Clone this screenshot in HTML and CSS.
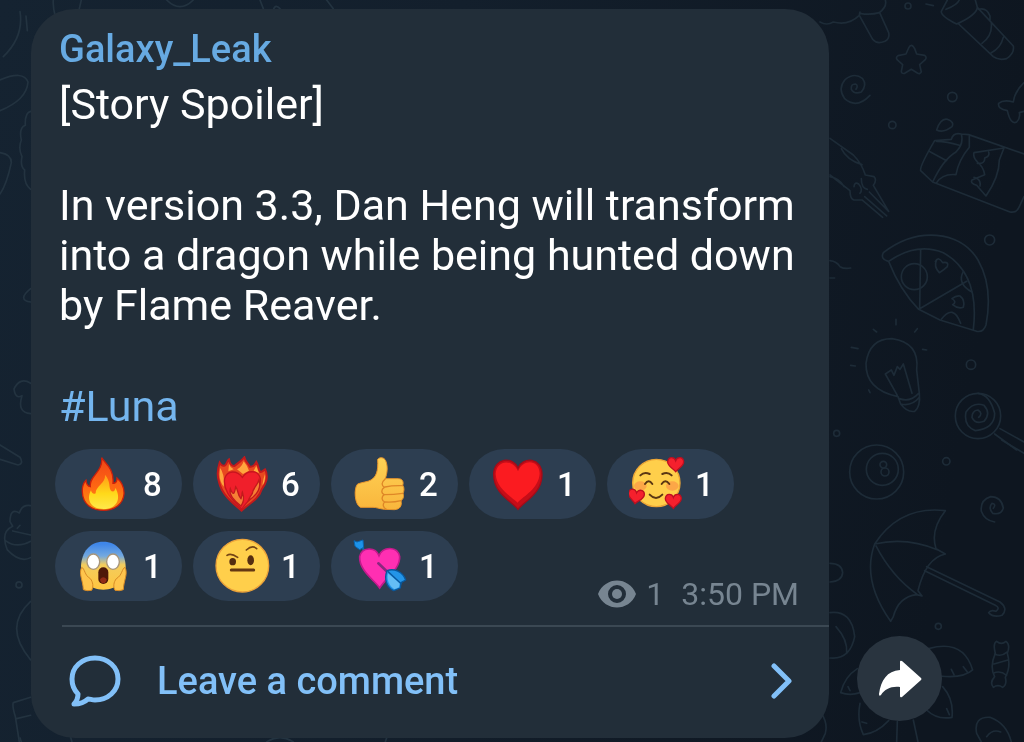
FILE: index.html
```
<!DOCTYPE html>
<html lang="en">
<head>
    <meta charset="UTF-8">
    <meta name="viewport" content="width=device-width, initial-scale=1.0">
    <title>Galaxy_Leak</title>
    <link rel="stylesheet" href="styles.css">
</head>
<body>

<!-- chat wallpaper doodles -->
<svg class="wallpaper" viewBox="0 0 1024 742" preserveAspectRatio="xMaxYMin slice" aria-hidden="true">
    <g transform="translate(820 0) scale(.3333)">
        <path d="M0 66Q20 78 40 66Q85 78 118 46Q120 30 120 40Q150 46 178 38Q202 20 196 0M118 46L158 118Q170 134 195 124Q210 115 206 98L180 40"/>
        <circle cx="264" cy="18" r="9"/><path d="M318 12L340 17"/>
        <path d="M382 0L364 34Q362 48 410 72Q470 45 472 22L466 0M378 28Q412 15 418 0M416 72L520 170Q535 182 560 176Q584 160 580 138L472 22M476 28Q500 22 510 48L510 60M486 130Q518 108 514 68M514 158Q542 144 550 112"/>
        <path d="M274 136Q279 136 284 146L290 162L314 166Q322 172 315 180L299 194L304 216Q300 224 292 219L274 208L254 220Q244 222 244 214L248 194L232 180Q226 172 234 167L258 162L266 144Q270 136 274 136Z"/>
        <path d="M108 268Q116 256 106 252Q92 252 94 268Q102 284 124 276Q142 254 128 236Q104 216 76 238Q52 266 74 296Q110 328 150 286"/>
        <circle cx="397" cy="291" r="14"/><circle cx="217" cy="375" r="11"/>
        <path d="M612 248Q584 275 580 306Q550 298 536 310Q532 326 562 332Q572 376 590 366Q602 354 598 338L612 334"/>
        <path d="M350 390Q362 354 382 358Q404 366 396 380Q370 400 350 390ZM338 546L302 512Q298 500 344 422L394 418Q400 396 424 402L446 404L612 462M338 546L570 636Q590 640 598 620L612 590M330 455L380 482M350 424Q380 424 418 436M338 546Q370 478 408 456Q432 432 424 402M350 548Q368 520 408 524Q416 480 448 442L448 406M552 444L462 458Q458 472 474 488Q490 500 494 524L456 540Q450 550 470 556L498 588Q538 530 538 480ZM472 490Q496 492 494 474Q510 470 506 456M462 532Q484 536 480 558"/>
        <path d="M30 415L100 465Q125 490 136 525L162 530Q172 540 160 556L206 634M64 446Q80 480 126 494M30 525L90 572Q90 596 102 600L126 600L188 652M30 530Q60 536 72 560M102 560Q104 544 116 552Q130 568 120 580M124 536Q124 564 142 568M134 590L200 648M148 576L206 634"/>
    </g>
    <g transform="translate(820 220) scale(.3333)">
        <path d="M190 98C290 20 420 30 474 120Q520 200 498 315Q490 338 470 334L360 300L296 268Q240 210 206 124Q180 118 190 98ZM206 124Q290 66 370 98Q480 160 460 328M302 90L299 266L440 184"/>
        <circle cx="283" cy="170" r="39"/><path d="M430 155Q410 190 456 216M364 298Q400 250 422 310M350 120Q340 140 358 158Q372 150 382 140Q388 124 368 128Q356 108 346 124M396 236Q408 226 420 228Q436 240 430 262Q414 268 398 254Q412 246 396 236"/>
        <circle cx="509" cy="60" r="15"/><circle cx="453" cy="434" r="14"/><circle cx="50" cy="640" r="9"/>
        <path d="M30 122Q50 124 60 140Q74 148 92 144M30 174L44 174M228 298L228 314M160 328L170 336M292 326L284 336M94 382L114 386M92 436L106 438M308 388L320 390M146 510L150 518"/>
        <path d="M234 530Q136 510 138 430Q148 356 216 356Q300 368 290 450L298 520Q302 560 284 574Q262 578 242 552ZM232 526L196 462L214 450L222 466L232 440L240 448L250 432L276 520M238 536Q270 548 296 520M242 552Q276 560 298 532"/>
        <circle cx="474" cy="588" r="68"/><path d="M476 592Q490 580 474 570Q456 572 456 592Q466 614 492 604Q514 580 492 556Q460 544 438 576Q430 618 466 632Q524 626 524 580Q510 524 474 520M540 626L612 666M524 642L590 690"/>
    </g>
    <g transform="translate(820 440) scale(.3333)">
        <circle cx="170" cy="96" r="81"/><circle cx="187" cy="88" r="48"/><circle cx="190" cy="74" r="10"/><circle cx="195" cy="96" r="12"/>
        <circle cx="379" cy="64" r="11"/><circle cx="355" cy="559" r="9"/><path d="M545 0L612 40"/>
        <path d="M520 205Q530 192 516 190Q504 204 518 220Q544 226 550 204Q544 170 512 170Q480 180 484 214Q494 242 524 246"/>
        <path d="M164 312Q240 196 376 212Q330 270 348 326L376 342Q318 354 294 452L306 468L290 464Q236 470 220 530L212 544Q124 420 164 312Q260 290 354 330M168 318Q216 410 290 462M320 380L540 486Q566 506 546 526Q520 534 506 518Q512 508 528 514Q542 504 526 496L314 392"/>
        <path d="M30 370Q66 370 68 398Q66 424 30 426M30 518Q96 510 104 590Q90 660 30 654M48 560Q84 600 80 640"/>
        <path d="M326 626Q430 596 458 690Q430 716 360 708M394 688L402 704M430 680L442 696M368 740Q402 778 396 832Q350 840 320 810M112 686Q74 710 62 758Q90 768 120 758M120 790Q110 840 130 884Q170 880 206 842M232 845L230 906M280 840L294 906M84 740L90 752M380 806L388 824M126 846L140 850"/>
        <path d="M526 640Q518 610 530 604Q544 616 558 604Q572 614 562 640Q574 680 556 712Q562 734 548 742Q534 732 520 742Q508 728 524 710Q508 680 526 640ZM524 642Q544 652 562 636M522 672L564 660M520 700Q540 690 560 706M470 880Q460 830 510 832Q560 850 574 906M470 880L484 906M500 890Q518 866 542 876M4 820Q24 850 16 880L4 906"/>
    </g>
    <g class="lighter" transform="scale(.3333)">
        <path d="M60 35Q72 110 10 170M78 48L82 92M0 240Q70 210 84 246Q80 300 0 332M92 334Q74 338 76 376Q56 384 64 420Q54 446 66 470Q60 500 74 510Q70 552 92 568M0 458Q34 463 34 488Q20 554 0 582M92 866Q50 900 92 906M92 1150Q60 1130 42 1167Q46 1199 66 1187Q50 1238 92 1241M0 1335L60 1372Q72 1392 54 1395L0 1378"/>
        <path d="M92 1517Q66 1513 58 1539Q30 1522 30 1565L38 1579Q0 1596 22 1650Q60 1690 92 1673M38 1593L92 1605M16 1622Q50 1647 92 1624M60 1576L52 1585M92 1804Q8 1880 92 1980M92 2092L40 2108Q36 2118 46 2150L58 2226M50 2156L92 2146"/>
        <circle cx="57" cy="1755" r="9"/>
        <path d="M160 0Q158 20 166 50M244 0L238 26M500 0Q540 40 580 0M780 0L790 26M820 30Q826 10 840 26M980 0L1000 26M60 2214L64 2226M212 2212L216 2226M800 2226Q840 2200 880 2226M1160 2214L1156 2226"/>
    </g>
</svg>

<main class="chat">
    <article class="bubble">
        <div class="content">
            <h2 class="channel">Galaxy_Leak</h2>
            <p>[Story Spoiler]</p>
            <p>In version 3.3, Dan Heng will transform into a dragon while being hunted down by Flame Reaver.</p>
            <p><a href="#luna">#Luna</a></p>
        </div>

        <div class="reactions">
            <button type="button" class="reaction" aria-label="Fire, 8">
                <svg viewBox="0 0 168 168">
                    <defs>
                        <linearGradient id="fireOuter" x1="0" y1="0" x2="0" y2="1"><stop offset="0" stop-color="#f04416"/><stop offset=".6" stop-color="#ff6a13"/><stop offset="1" stop-color="#f79a10"/></linearGradient>
                        <linearGradient id="fireInner" x1="0" y1="0" x2="0" y2="1"><stop offset="0" stop-color="#ff9a16"/><stop offset=".55" stop-color="#ffd91a"/><stop offset="1" stop-color="#ffe94a"/></linearGradient>
                    </defs>
                    <path d="M74 5C84 22 112 38 108 82C118 82 120 74 120 66C136 80 142 96 141 114C138 145 112 163 80 163C44 163 17 144 16 108C15 92 20 80 27 73C28 84 33 91 40 92C35 60 79 48 74 5Z" fill="url(#fireOuter)" stroke="#c9200c" stroke-width="4"/>
                    <path d="M84 56C104 80 92 94 104 106C112 108 115 101 115 95C134 128 120 158 80 159C38 159 28 128 42 103C44 112 50 116 56 112C55 90 87 82 84 56Z" fill="url(#fireInner)"/>
                </svg>
                <span>8</span>
            </button>
            <button type="button" class="reaction" aria-label="Heart on fire, 6">
                <svg viewBox="0 0 168 168">
                    <path d="M80 164C62 148 20 118 12 78C4 54 10 32 14 20C20 30 26 30 30 28C36 24 36 14 42 10C44 22 50 30 58 30C66 24 76 18 88 4C92 20 100 22 104 32C114 34 120 26 124 18C132 30 130 42 136 48C144 48 146 42 150 40C162 62 152 86 140 100C130 132 102 142 80 164Z" fill="#e8481f" stroke="#c21a1c" stroke-width="6"/>
                    <path d="M16 36Q30 60 26 92Q8 70 16 36ZM42 24Q46 36 56 40L40 46ZM86 16Q96 28 102 44L84 54L66 40Q80 34 86 16ZM124 30L132 52L116 44ZM150 54Q152 78 142 88Q144 70 150 54Z" fill="#ffa63e"/>
                    <path d="M80 160C64 140 22 112 29 68C36 42 66 42 82 64C98 40 130 42 136 68C140 104 100 128 80 160Z" fill="#f01f2b" stroke="#c9141f" stroke-width="4"/>
                    <path d="M46 98C54 118 58 118 62 92C70 100 66 116 78 128C82 120 80 112 82 108C90 130 84 140 78 150C62 138 40 120 46 98Z" fill="#f58035" stroke="#c21a1c" stroke-width="4"/>
                    <path d="M132 72C126 90 114 96 112 112C108 120 102 126 100 134C124 118 140 96 132 72Z" fill="#f58035" stroke="#c21a1c" stroke-width="4"/>
                </svg>
                <span>6</span>
            </button>
            <button type="button" class="reaction" aria-label="Thumbs up, 2">
                <svg viewBox="0 0 168 168">
                    <defs><linearGradient id="thumb" x1="0" y1="0" x2="0" y2="1"><stop offset="0" stop-color="#ffd255"/><stop offset="1" stop-color="#f9b63c"/></linearGradient></defs>
                    <path d="M74 10C80 2 94 4 98 14C106 34 102 52 97 68L136 68C148 68 153 78 149 88C155 96 153 106 150 112C154 122 150 130 144 134C148 150 140 160 124 161L94 160C78 158 70 154 60 154L22 154C4 144 2 96 14 84C28 78 44 78 54 72C70 62 76 46 74 10Z" fill="url(#thumb)" stroke="#e6942c" stroke-width="3"/>
                    <path d="M97 68C86 78 84 88 94 94C84 100 84 112 94 116C84 122 86 134 95 138C88 144 90 156 100 160M96 93Q118 88 149 89M95 116Q122 116 149 112M96 138Q120 140 144 134" fill="none" stroke="#df8727" stroke-width="4" stroke-linecap="round"/>
                </svg>
                <span>2</span>
            </button>
            <button type="button" class="reaction" aria-label="Red heart, 1">
                <svg viewBox="0 0 168 168">
                    <path d="M81 160C62 136 8 112 8 56C8 4 66 0 81 36C96 0 153 4 153 56C153 112 100 136 81 160Z" fill="#c60d18" stroke="#a50b18" stroke-width="4"/>
                    <path d="M80 140C64 124 16 98 14 54C16 10 66 8 81 46C96 8 144 10 146 52C144 98 98 120 80 140Z" fill="#fb1b20"/>
                </svg>
                <span>1</span>
            </button>
            <button type="button" class="reaction" aria-label="Smiling face with hearts, 1">
                <svg viewBox="0 0 168 168">
                    <defs><path id="miniHeart" d="M0 21C-7 11-25 5-24-9C-22-25-4-24 0-12C4-24 23-25 24-9C24 5 7 11 0 21Z"/></defs>
                    <circle cx="82" cy="81" r="71" fill="#ffcf4b" stroke="#eda636" stroke-width="4"/>
                    <ellipse cx="34" cy="90" rx="19" ry="14" fill="#fb9a46" opacity=".75"/>
                    <ellipse cx="130" cy="90" rx="19" ry="14" fill="#fb9a46" opacity=".75"/>
                    <path d="M34 58Q46 46 62 54M100 54Q116 46 128 58M48 84Q59 68 70 84M98 84Q109 68 121 84M62 116Q81 136 100 116" fill="none" stroke="#5b3713" stroke-width="6" stroke-linecap="round"/>
                    <use href="#miniHeart" transform="translate(140 26)" fill="#f5202d" stroke="#bd1020" stroke-width="4"/>
                    <use href="#miniHeart" transform="translate(21 122) rotate(8)" fill="#f5202d" stroke="#bd1020" stroke-width="4"/>
                    <use href="#miniHeart" transform="translate(133 136)" fill="#f5202d" stroke="#bd1020" stroke-width="4"/>
                </svg>
                <span>1</span>
            </button>
            <button type="button" class="reaction" aria-label="Screaming face, 1">
                <svg viewBox="0 0 168 168">
                    <defs><linearGradient id="scream" x1="0" y1="0" x2="0" y2="1"><stop offset=".05" stop-color="#3f86e8"/><stop offset=".3" stop-color="#73a9e0"/><stop offset=".48" stop-color="#f3cc5d"/><stop offset="1" stop-color="#ffc63f"/></linearGradient></defs>
                    <path d="M79 11C120 11 144 42 146 84C146 128 120 155 79 155C38 155 12 128 12 84C14 42 38 11 79 11Z" fill="url(#scream)"/>
                    <path d="M14 88C24 92 22 112 40 122C48 132 50 146 44 157Q30 160 19 155C18 126 4 108 14 88ZM144 88C134 92 136 112 118 122C110 132 108 146 114 157Q128 160 139 155C140 126 154 108 144 88Z" fill="#ffc54c" stroke="#d78a25" stroke-width="3"/>
                    <ellipse cx="49" cy="71" rx="19" ry="23" fill="#fff" stroke="#a7957b" stroke-width="4"/>
                    <ellipse cx="108" cy="71" rx="19" ry="23" fill="#fff" stroke="#a7957b" stroke-width="4"/>
                    <rect x="64" y="88" width="30" height="50" rx="15" fill="#4d1808"/>
                    <path d="M69 124Q79 112 89 124Q88 135 79 136Q70 135 69 124Z" fill="#8f2b16"/>
                </svg>
                <span>1</span>
            </button>
            <button type="button" class="reaction" aria-label="Face with raised eyebrow, 1">
                <svg viewBox="0 0 168 168">
                    <circle cx="82" cy="83" r="79" fill="#ffcf4b" stroke="#eba23a" stroke-width="4"/>
                    <ellipse cx="53" cy="71" rx="10" ry="11" fill="#552d10"/>
                    <ellipse cx="107" cy="67" rx="10" ry="15" fill="#552d10"/>
                    <path d="M36 52Q48 44 68 58M94 36Q112 20 125 32" fill="none" stroke="#754515" stroke-width="5" stroke-linecap="round"/>
                    <path d="M49 96H116" stroke="#643712" stroke-width="9" stroke-linecap="round"/>
                </svg>
                <span>1</span>
            </button>
            <button type="button" class="reaction" aria-label="Heart with arrow, 1">
                <svg viewBox="0 0 168 168">
                    <path d="M20 20L38 42" stroke="#156aa9" stroke-width="6"/>
                    <path d="M3 8L12 12L30 6L32 28L20 35L6 25Z" fill="#1d93ea" stroke="#0864af" stroke-width="3"/>
                    <path d="M80 150C66 128 18 98 20 56C26 28 66 24 78 53C90 24 134 24 140 56C142 92 100 118 80 150Z" fill="#ff2fb2" stroke="#c31a8c" stroke-width="5"/>
                    <path d="M76 76L116 114" stroke="#8a287e" stroke-width="8" stroke-linecap="round"/>
                    <path d="M102 98C122 90 150 100 158 126L144 134L142 150L122 158C102 148 92 124 102 98Z" fill="#2395e8" stroke="#09589c" stroke-width="4" stroke-linejoin="round"/>
                    <path d="M105 106C100 124 108 144 124 154L138 148L140 136Z" fill="#64bdf5"/>
                    <path d="M104 100L146 139" stroke="#09589c" stroke-width="4"/>
                </svg>
                <span>1</span>
            </button>

            <div class="meta">
                <svg viewBox="0 0 38 28" aria-hidden="true">
                    <path fill-rule="evenodd" d="M0 14C7-4 31-4 38 14C31 32 7 32 0 14ZM19 5A9 9 0 0 0 19 23A9 9 0 0 0 19 5Z"/>
                    <circle cx="19" cy="14" r="5"/>
                </svg>
                <span>1</span>
                <time datetime="15:50">3:50 PM</time>
            </div>
        </div>

        <button type="button" class="comment">
            <svg class="comment-icon" viewBox="0 0 52 52" aria-hidden="true">
                <path d="M26 3C39 3 49 12 49 24C49 36 39 45 26 45C23 45 21 44 19 44C15 48 10 49 5 49C8 46 9 42 9 39C5 35 3 30 3 24C3 12 13 3 26 3Z"/>
            </svg>
            <span>Leave a comment</span>
            <svg class="chevron" viewBox="0 0 22 36" aria-hidden="true">
                <path d="M3 3L18 18L3 33"/>
            </svg>
        </button>
    </article>

    <button type="button" class="share" aria-label="Share">
        <svg viewBox="0 0 44 38" aria-hidden="true">
            <path d="M22 2Q22 0 24 1L43 18Q44 19 43 20L24 37Q22 38 22 36V27C13 26 7 29 3 35Q1 37 1 34C3 20 9 11 22 10Z"/>
        </svg>
    </button>
</main>

</body>
</html>
```
FILE: styles.css
```
* {
    box-sizing: border-box;
}
body {
    margin: 0;
    min-height: 100vh;
    font-family: Roboto, "Liberation Sans", sans-serif;
    color: #fff;
    background: linear-gradient(100deg, #152331 0%, #131f2c 40%, #0e1620 90%);
}
h2, p {
    margin: 0;
}
a {
    color: #74b5ee;
    text-decoration: none;
}
button {
    padding: 0;
    border: none;
    font-family: inherit;
    cursor: pointer;
}
.wallpaper {
    position: fixed;
    inset: 0;
    z-index: -1;
    width: 100%;
    height: 100%;
    fill: none;
    stroke: #1d2b37;
    stroke-width: 5;
    stroke-linecap: round;
    stroke-linejoin: round;
}
.wallpaper .lighter {
    stroke: #233340;
}
.chat {
    display: flex;
    align-items: flex-end;
    gap: 28px;
    padding: 9px 82px 4px 31px;
}
.bubble {
    flex: 1;
    overflow: hidden;
    border-radius: 44px;
    background: #222e39;
}
.content {
    padding: 15px 24px 0 28px;
    font-size: 43px;
    line-height: 50px;
}
.content p {
    margin-bottom: 51px;
}
.content p:last-child {
    margin-bottom: 0;
}
.channel {
    font-size: 38px;
    font-weight: 500;
    line-height: 50px;
    color: #67aae2;
    margin-bottom: 5px;
}
.reactions {
    display: flex;
    flex-wrap: wrap;
    align-items: flex-start;
    gap: 12px 11px;
    padding: 18px 30px 11px 24px;
}
.reaction {
    display: flex;
    align-items: center;
    gap: 10px;
    width: 127px;
    height: 70px;
    padding-left: 22px;
    border-radius: 35px;
    background: #2d3e51;
    color: #fff;
    font-size: 33px;
    font-weight: 500;
}
.reaction svg {
    width: 56px;
    height: 56px;
}
.meta {
    display: flex;
    align-items: center;
    gap: 10px;
    margin: 43px 0 0 auto;
    font-size: 32px;
    line-height: 40px;
    color: #778591;
}
.meta svg {
    width: 38px;
    height: 28px;
    fill: #778591;
}
.meta time {
    margin-left: 7px;
}
.comment {
    display: flex;
    align-items: center;
    width: calc(100% - 31px);
    height: 113px;
    margin-left: 31px;
    padding: 0 36px 3px 7px;
    border-top: 2px solid #3b4853;
    background: none;
    color: #82c0f8;
    font-size: 38px;
    font-weight: 500;
}
.comment svg {
    fill: none;
    stroke: #82c0f8;
    stroke-width: 5;
    stroke-linecap: round;
    stroke-linejoin: round;
}
.comment-icon {
    width: 52px;
    height: 52px;
    margin-right: 36px;
}
.chevron {
    width: 22px;
    height: 36px;
    margin-left: auto;
}
.share {
    display: flex;
    align-items: center;
    justify-content: center;
    width: 85px;
    height: 85px;
    margin-bottom: 17px;
    border-radius: 50%;
    background: #29343f;
}
.share svg {
    width: 44px;
    height: 38px;
    fill: #fff;
}
```
